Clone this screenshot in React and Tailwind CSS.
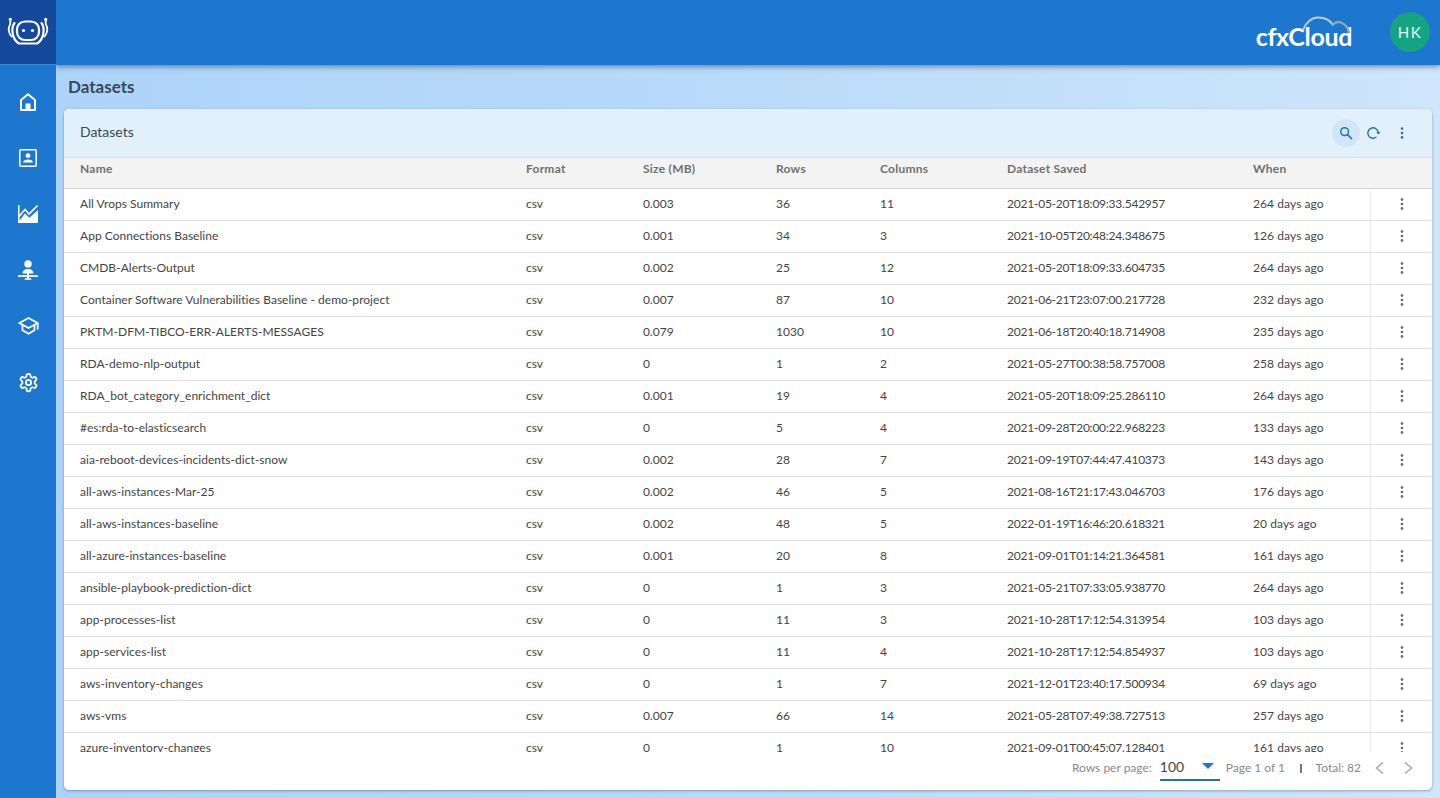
import React from "react";

const rows = [
  ["All Vrops Summary","csv","0.003","36","11","2021-05-20T18:09:33.542957","264 days ago"],
  ["App Connections Baseline","csv","0.001","34","3","2021-10-05T20:48:24.348675","126 days ago"],
  ["CMDB-Alerts-Output","csv","0.002","25","12","2021-05-20T18:09:33.604735","264 days ago"],
  ["Container Software Vulnerabilities Baseline - demo-project","csv","0.007","87","10","2021-06-21T23:07:00.217728","232 days ago"],
  ["PKTM-DFM-TIBCO-ERR-ALERTS-MESSAGES","csv","0.079","1030","10","2021-06-18T20:40:18.714908","235 days ago"],
  ["RDA-demo-nlp-output","csv","0","1","2","2021-05-27T00:38:58.757008","258 days ago"],
  ["RDA_bot_category_enrichment_dict","csv","0.001","19","4","2021-05-20T18:09:25.286110","264 days ago"],
  ["#es:rda-to-elasticsearch","csv","0","5","4","2021-09-28T20:00:22.968223","133 days ago"],
  ["aia-reboot-devices-incidents-dict-snow","csv","0.002","28","7","2021-09-19T07:44:47.410373","143 days ago"],
  ["all-aws-instances-Mar-25","csv","0.002","46","5","2021-08-16T21:17:43.046703","176 days ago"],
  ["all-aws-instances-baseline","csv","0.002","48","5","2022-01-19T16:46:20.618321","20 days ago"],
  ["all-azure-instances-baseline","csv","0.001","20","8","2021-09-01T01:14:21.364581","161 days ago"],
  ["ansible-playbook-prediction-dict","csv","0","1","3","2021-05-21T07:33:05.938770","264 days ago"],
  ["app-processes-list","csv","0","11","3","2021-10-28T17:12:54.313954","103 days ago"],
  ["app-services-list","csv","0","11","4","2021-10-28T17:12:54.854937","103 days ago"],
  ["aws-inventory-changes","csv","0","1","7","2021-12-01T23:40:17.500934","69 days ago"],
  ["aws-vms","csv","0.007","66","14","2021-05-28T07:49:38.727513","257 days ago"],
  ["azure-inventory-changes","csv","0","1","10","2021-09-01T00:45:07.128401","161 days ago"],
];

const cols = "grid grid-cols-[446px_117px_133px_104px_127px_246px_133px_62px]";

const cellTracking = {
  0: "tracking-[0.03px]",
  5: "tracking-[-0.23px]",
  6: "tracking-[0.08px]",
};

const Dots = ({ color }) => (
  <svg width="14" height="14" viewBox="0 0 14 14" fill={color}>
    <circle cx="7" cy="2.6" r="1.3" />
    <circle cx="7" cy="7" r="1.3" />
    <circle cx="7" cy="11.4" r="1.3" />
  </svg>
);

const RobotLogo = () => (
  <svg width="42" height="30" viewBox="0 0 42 30" fill="none" stroke="#fff" strokeWidth="2.200" strokeLinecap="round">
    <rect x="10" y="4.500" width="22" height="18.500" rx="8" />
    <path d="M7.500 6C4 10.500 4.500 22 12 26.500H30C37.500 22 38 10.500 34.500 6" />
    <path d="M3.300 3V7C.8 10.500 1.300 16 4.500 19.500M38.700 3V7C41.200 10.500 40.700 16 37.500 19.500" strokeWidth="1.800" />
    <circle cx="3.300" cy="2.400" r="1.600" fill="#fff" stroke="none" />
    <circle cx="38.700" cy="2.400" r="1.600" fill="#fff" stroke="none" />
    <circle cx="16.500" cy="13.500" r="1.600" fill="#fff" stroke="none" />
    <circle cx="25.500" cy="13.500" r="1.600" fill="#fff" stroke="none" />
  </svg>
);

const IconHome = () => (
  <svg width="16" height="18" viewBox="0 0 16 18" fill="none" stroke="#fff" strokeWidth="2">
    <path d="M1 7 8 1.300 15 7v10H1z" strokeLinejoin="round" />
    <rect x="5.500" y="10.500" width="5" height="6.500" fill="#fff" stroke="none" />
  </svg>
);
const IconContact = () => (
  <svg width="18" height="18" viewBox="0 0 18 18" fill="none">
    <rect x=".8" y=".8" width="16.400" height="16.400" rx="1" stroke="#fff" strokeWidth="1.500" />
    <circle cx="9" cy="6.600" r="2.400" fill="#fff" />
    <path d="M4 13.600c.3-2.300 2.500-3.200 5-3.200s4.700.9 5 3.200z" fill="#fff" />
  </svg>
);
const IconChart = () => (
  <svg width="20" height="18" viewBox="0 0 20 18" fill="none">
    <path d="M.8 0v17.300H20" stroke="#fff" strokeWidth="1.500" />
    <path d="M1 11.500 7 4.500l4 4.500L19.500.5" stroke="#fff" strokeWidth="1.600" />
    <path d="M1.500 17.500v-2L7 8.500l4.300 4.300L20 5v12.500z" fill="#fff" />
  </svg>
);
const IconPerson = () => (
  <svg width="20" height="20" viewBox="0 0 20 20" fill="#fff">
    <circle cx="10" cy="3.900" r="3.700" />
    <path d="M4.600 13.400c0-3 2.400-4.400 5.400-4.400s5.400 1.400 5.400 4.400z" />
    <rect x="0" y="15.200" width="20" height="1.700" />
    <rect x="9" y="13" width="2" height="6.500" />
    <rect x="6.500" y="18.200" width="7" height="1.600" rx=".8" />
  </svg>
);
const IconGrad = () => (
  <svg width="21" height="18" viewBox="0 0 21 18" fill="none" stroke="#fff" strokeWidth="1.800" strokeLinejoin="round">
    <path d="M10.500 1 1.300 6l9.200 5 9.200-5z" />
    <path d="M4.500 8v5.300l6 3.500 6-3.500V8" />
    <path d="M19.700 6v6.500" />
  </svg>
);
const IconGear = () => (
  <svg width="21" height="21" viewBox="0 0 24 24" fill="none" stroke="#fff" strokeWidth="2" strokeLinecap="round" strokeLinejoin="round">
    <path d="M12.220 2h-.44a2 2 0 0 0-2 2v.18a2 2 0 0 1-1 1.730l-.43.25a2 2 0 0 1-2 0l-.15-.08a2 2 0 0 0-2.730.73l-.22.380a2 2 0 0 0 .73 2.730l.15.100a2 2 0 0 1 1 1.720v.510a2 2 0 0 1-1 1.740l-.15.090a2 2 0 0 0-.73 2.730l.22.380a2 2 0 0 0 2.730.73l.15-.08a2 2 0 0 1 2 0l.43.250a2 2 0 0 1 1 1.730V20a2 2 0 0 0 2 2h.44a2 2 0 0 0 2-2v-.18a2 2 0 0 1 1-1.730l.43-.25a2 2 0 0 1 2 0l.15.080a2 2 0 0 0 2.730-.73l.22-.39a2 2 0 0 0-.73-2.730l-.15-.080a2 2 0 0 1-1-1.740v-.5a2 2 0 0 1 1-1.740l.15-.090a2 2 0 0 0 .73-2.730l-.22-.380a2 2 0 0 0-2.730-.73l-.15.080a2 2 0 0 1-2 0l-.43-.250a2 2 0 0 1-1-1.730V4a2 2 0 0 0-2-2z" />
    <circle cx="12" cy="12" r="3" />
  </svg>
);

const nav = [IconHome, IconContact, IconChart, IconPerson, IconGrad, IconGear];

export default function App() {
  return (
    <div className="flex h-[798px] w-[1440px] overflow-hidden bg-gradient-to-r from-[#acd3f8] via-[#b9daf9] to-[#cfe6fb] font-['Lato','Noto_Sans',sans-serif] text-[#444444]">
      <aside className="z-20 flex w-14 shrink-0 flex-col bg-[#1e77ce]">
        <div className="flex h-[65px] items-center justify-center border-b border-[#3a8ad6] bg-[#15499b]">
          <RobotLogo />
        </div>
        <nav className="flex flex-col items-center gap-9 pt-[27px]">
          {nav.map((I, i) => (
            <div key={i} className="flex h-5 w-6 items-center justify-center"><I /></div>
          ))}
        </nav>
      </aside>

      <div className="flex min-w-0 flex-1 flex-col">
        <header className="z-10 flex h-[65px] shrink-0 items-center justify-end bg-[#1e77ce] pr-[10px] shadow-[0_2px_5px_rgba(30,50,90,0.5)]">
          <div className="relative mr-[38px] mt-[7px] text-[25px] leading-8 font-bold tracking-[-0.35px] text-white">
            cfxCloud
            <svg className="absolute left-[46px] top-[-4px]" width="50" height="18" viewBox="0 0 50 18" fill="none" stroke="#c4cad2" strokeWidth="2">
              <path d="M1 14C4 6 10 1.500 16 1.500 23 1.500 28 4 31 9" />
              <path d="M30 9.500C33 6 37 5.500 40 7 44 9 46.500 13 47 17" stroke="#9aa3ad" strokeWidth="2.500" />
            </svg>
          </div>
          <div className="mb-[1px] flex h-10 w-10 items-center justify-center rounded-full bg-[#16a382] text-[15px] tracking-[1.5px] text-[#e6f5f1]">HK</div>
        </header>

        <main className="flex min-h-0 flex-1 flex-col px-2 pb-2">
          <h1 className="flex h-11 shrink-0 items-center px-1 pb-[1px] text-[17px] leading-6 font-bold text-[#34495f]">Datasets</h1>
          <section className="flex min-h-0 flex-1 flex-col overflow-hidden rounded-[5px] bg-white shadow-[0_1px_3px_rgba(0,0,0,0.3)]">
            <div className="flex h-[49px] shrink-0 items-center justify-between border-b border-[#dcdfe2] bg-[#e2f0fb] pl-4 pr-4">
              <span className="pb-[2px] text-sm text-[#3c4652]">Datasets</span>
              <div className="flex items-center">
                <div className="flex h-7 w-7 items-center justify-center rounded-full bg-[#d2e6f9]">
                  <svg width="14" height="14" viewBox="0 0 14 14" fill="none" stroke="#2173bf" strokeWidth="1.500" strokeLinecap="round">
                    <circle cx="5.600" cy="5.600" r="3.900" />
                    <path d="m8.600 8.600 4 4" />
                  </svg>
                </div>
                <div className="flex h-7 w-7 items-center justify-center">
                  <svg width="16" height="16" viewBox="0 0 16 16" fill="none" stroke="#2173bf" strokeWidth="1.400">
                    <path d="M10 12.300A5.200 5.200 0 1 1 12.200 7.500" strokeLinecap="round" />
                    <path d="M10.200 6.900h4.400l-2.200 2.700z" fill="#2173bf" stroke="none" />
                  </svg>
                </div>
                <div className="flex h-7 w-7 items-center justify-center"><Dots color="#2173bf" /></div>
              </div>
            </div>

            <div className={`${cols} h-[31px] shrink-0 border-b border-[#d5d5d5] bg-[#f3f3f3] text-xs font-bold tracking-[0.25px] text-[#707070]`}>
              {["Name","Format","Size (MB)","Rows","Columns","Dataset Saved","When",""].map((h, i) => (
                <div key={i} className="px-4 pt-[3px] leading-[16px]">{h}</div>
              ))}
            </div>

            <div className="min-h-0 flex-1 overflow-hidden">
              {rows.map((r) => (
                <div key={r[0]} className={`${cols} h-8 border-b border-[#e0e0e0] text-xs text-[#444444]`}>
                  {r.map((c, i) => (
                    <div key={i} className={`flex items-center whitespace-nowrap px-4 pb-[2px] ${cellTracking[i] || ""}`}>{c}</div>
                  ))}
                  <div className="flex items-center justify-center border-l border-[#ececec] pb-[2px]"><Dots color="#666666" /></div>
                </div>
              ))}
            </div>

            <footer className="flex h-[38px] shrink-0 items-center justify-end pb-[6px] pr-[17px] text-xs text-[#8a8a8a]">
              <span className="mr-2">Rows per page:</span>
              <div className="mr-[6px] flex h-[25px] w-[60px] items-center justify-between border-b-2 border-[#2a6fa8] pr-[6px] text-sm text-[#444444]">
                <span>100</span>
                <svg width="12" height="6" viewBox="0 0 12 6" className="mb-[3px]"><path d="M0 0h12L6 6z" fill="#1e77ce" /></svg>
              </div>
              <span>Page 1 of 1</span>
              <span className="ml-[15px] mr-[14px] h-[9px] w-[1.500px] bg-[#777777]"></span>
              <span className="mr-3">Total: 82</span>
              <svg width="14" height="14" viewBox="0 0 14 14" fill="none" stroke="#a8a8a8" strokeWidth="1.500" className="mr-[14px]"><path d="M10 1.500 3.500 7l6.500 5.500" /></svg>
              <svg width="14" height="14" viewBox="0 0 14 14" fill="none" stroke="#a8a8a8" strokeWidth="1.500"><path d="M4 1.500 10.500 7 4 12.500" /></svg>
            </footer>
          </section>
        </main>
      </div>
    </div>
  );
}
